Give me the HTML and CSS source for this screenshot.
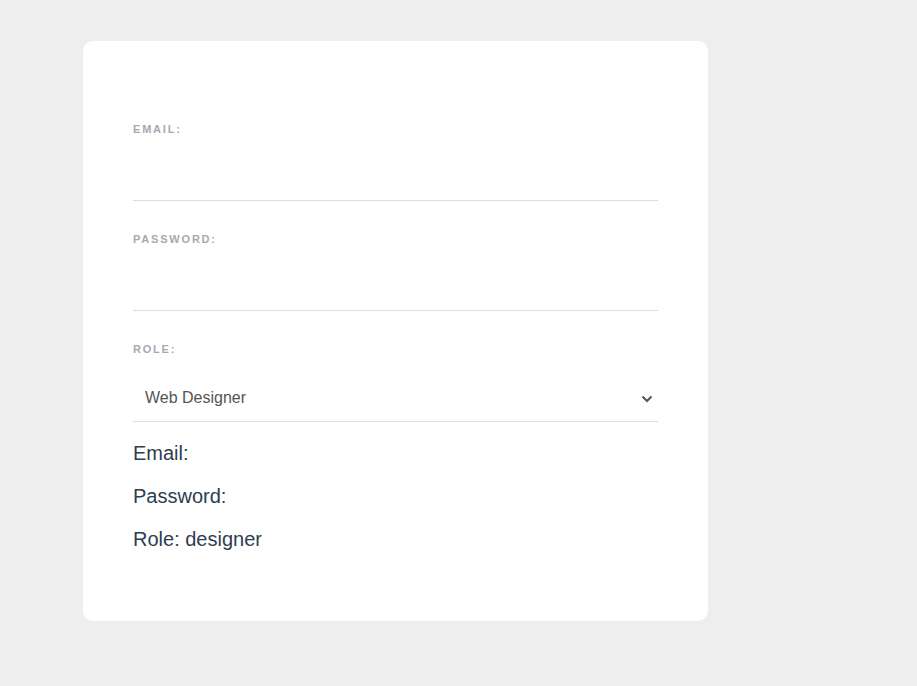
FILE: index.html
```html
<!DOCTYPE html>
<html lang="en">
<head>
<meta charset="utf-8">
<title>Sign up</title>
<link rel="stylesheet" href="styles.css">
</head>
<body>
<form class="card">
  <label class="label" for="email">Email:</label>
  <input class="field" id="email" type="email">
  <label class="label" for="password">Password:</label>
  <input class="field" id="password" type="password">
  <label class="label" for="role">Role:</label>
  <div class="select-wrap">
    <select class="field select" id="role">
      <option value="designer">Web Designer</option>
      <option value="developer">Web Developer</option>
    </select>
    <svg class="chevron" width="12" height="8" viewBox="0 0 12 8" aria-hidden="true"><path d="M1.5 1.5 L6 6 L10.5 1.5" fill="none" stroke="#555" stroke-width="2"/></svg>
  </div>
  <p class="result first">Email: </p>
  <p class="result">Password: </p>
  <p class="result">Role: designer</p>
</form>
</body>
</html>
```
FILE: styles.css
```css
html, body {
  margin: 0;
  background: #eeeeee;
}
body {
  padding: 41px 0 0 83px;
  font-family: "Liberation Sans", Arial, sans-serif;
  color: #2c3e50;
}
.card {
  box-sizing: border-box;
  width: 625px;
  background: #ffffff;
  border-radius: 10px;
  padding: 50px 50px 70px;
  display: flex;
  flex-direction: column;
}
.label {
  display: block;
  margin: 32px 0 25px;
  font-size: 11px;
  line-height: 13px;
  font-weight: bold;
  letter-spacing: 1.8px;
  text-transform: uppercase;
  color: #a8a8ae;
}
.field {
  display: block;
  box-sizing: border-box;
  width: 100%;
  height: 40px;
  margin: 0;
  padding: 0 12px;
  border: none;
  border-bottom: 1px solid #dddddd;
  background: #ffffff;
  font-family: "Liberation Sans", Arial, sans-serif;
  font-size: 16px;
  color: #555555;
  outline: none;
}
.select-wrap {
  position: relative;
}
.select {
  appearance: none;
  -webkit-appearance: none;
  height: 41px;
  padding: 0 40px 6px 12px;
  line-height: 18px;
}
.chevron {
  position: absolute;
  right: 5px;
  top: 14px;
  pointer-events: none;
}
.result {
  margin: 20px 0 0;
  font-size: 20px;
  line-height: 23px;
  color: #2c3e50;
}
```
